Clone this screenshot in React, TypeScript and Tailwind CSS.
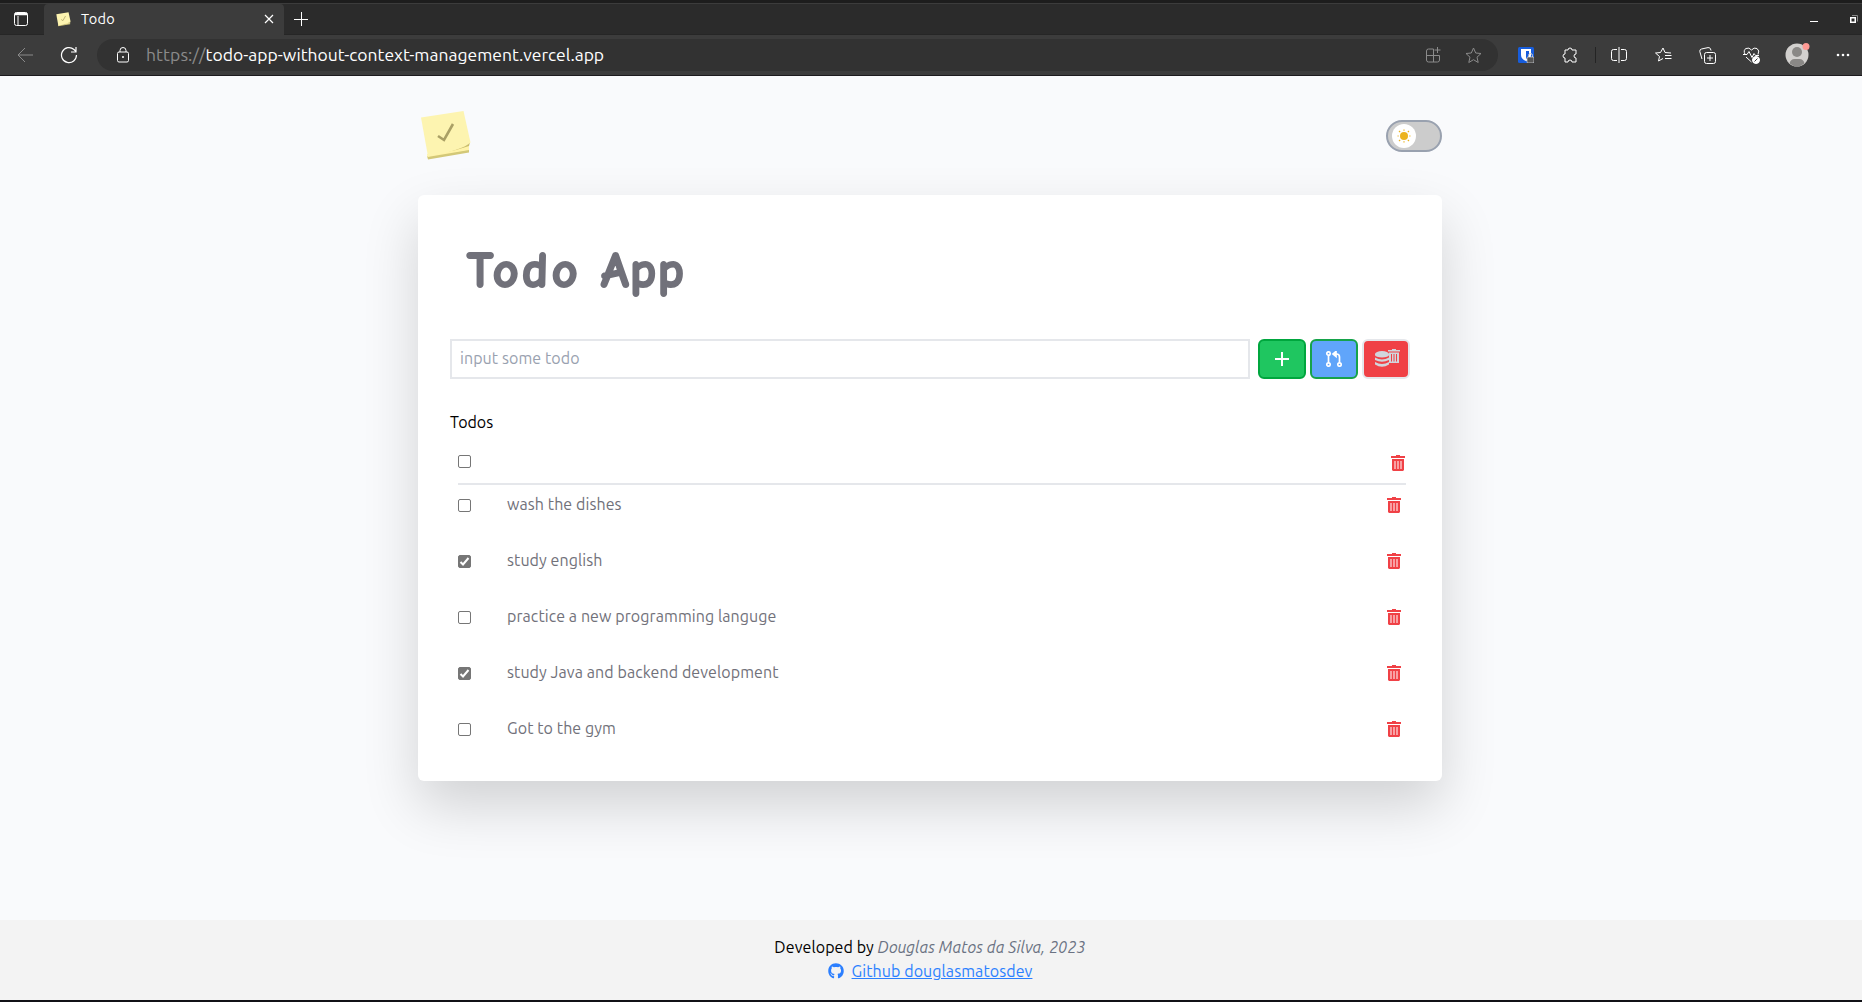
import React from 'react';
import { FaGithub } from 'react-icons/fa6';

const w = 'fill-none stroke-current';

function Note({ className }: { className: string }) {
  return (
    <svg viewBox="0 0 52 52" className={className}>
      <path d="M7 46 49 39.500 49 42.500 8 49.500Z" fill="#d3c878" />
      <path d="M7 44 49 35 49 40 7.500 47Z" fill="#fff3a8" />
      <path d="M26 42Q42 38 50 32L49 36 36 40Z" fill="#c9bd6c" />
      <path d="M1 7.500 43.500 1 50.500 32.500Q43 40 8 46.500Z" fill="#fdf4b0" />
      <path d="M18 26 24 30 33 14" fill="none" stroke="#aaa065" strokeWidth="2.600" />
    </svg>
  );
}

function Bin({ className }: { className: string }) {
  return (
    <svg viewBox="0 0 14 16" className={className} fill="currentColor">
      <path d="M5 0h4v1h5v2H0V1h5z" />
      <path d="M1 4h12v11l-1 1H2l-1-1z" />
      <path d="M3 6h2v8H3zM6 6h2v8H6zM9 6h2v8H9z" fill="#fff" fillOpacity=".5" />
    </svg>
  );
}

function Browser() {
  return (
    <header className="h-[76px] bg-[#3c3c3c] text-white border-b border-[#1c1a1e] flex flex-col">
      <div className="h-[35px] shrink-0 bg-[#2b2b2b] border-t-[3px] border-[#1d1d1d] flex">
        <div className="h-full w-full border-t border-t-[#3c3c3c] border-b border-b-[#262626] flex items-center">
          <svg viewBox="0 0 14 14" className={`ml-[14px] size-[14px] ${w}`}>
            <rect x=".5" y=".5" width="13" height="13" rx="2" />
            <path d="M.5 2.500h13M4 4v9" /><path d="M1 2h12" strokeWidth="2.500" />
          </svg>
          <div className="ml-4 w-60 h-[31px] bg-[#3c3c3c] rounded-t flex items-center">
            <Note className="ml-3 size-[15px]" />
            <span className="ml-[10px] text-[14.500px] leading-4 tracking-[0.3px] w-[160px]">Todo</span>
            <svg viewBox="0 0 10 10" className={`ml-[23px] size-[10px] ${w}`}><path d="m1 1 8 8M9 1 1 9" strokeWidth="1.200" /></svg>
          </div>
          <svg viewBox="0 0 14 14" className={`ml-[10px] size-[14px] ${w}`}><path d="M7.500 0v14M0 7.500h14" /></svg>
          <svg viewBox="0 0 50 18" className={`ml-auto w-[50px] h-[18px] ${w}`}>
            <path d="M0 11.500h8" /><rect x="40.750" y="7.750" width="4.500" height="4.500" strokeWidth="1.500" /><path d="M42 5.500h5.500v6" stroke="#888" />
          </svg>
          <span className="w-[2px]" />
        </div>
      </div>
      <div className="h-10 flex items-center">
        <svg viewBox="0 0 17 16" className={`ml-[17px] w-[17px] h-4 text-[#8a8a8a] ${w}`}><path d="M16 8H1M8 1 1 8l7 7" /></svg>
        <svg viewBox="0 0 18 18" className={`ml-[26px] size-[18px] ${w}`}><path d="M16.500 9A7.500 7.500 0 1 1 14 3.500L16 5.500M16 1v5h-5" strokeWidth="1.200" /></svg>
        <div className="ml-[19px] w-[1401px] h-8 rounded-full bg-[#323232] flex items-center">
          <svg viewBox="0 0 12 16" className={`ml-5 w-3 h-4 ${w}`}><rect x=".5" y="5" width="11" height="10" rx="1.500" /><path d="M3 5V3.500a3 3 0 0 1 6 0V5" /><circle cx="6" cy="10" r=".6" fill="currentColor" /></svg>
          <span className="ml-[17px] text-[17.500px] whitespace-nowrap"><span className="text-[#8b8b8b] tracking-[0.1px]">https://</span>todo-app-without-context-management.vercel.app</span>
          <svg viewBox="0 0 16 16" className={`ml-auto size-4 text-[#8b8b8b] ${w}`}><path d="M7.500 2H2.500q-2 0-2 2v9q0 2 2 2h9q2 0 2-2V8.500H.5M7.500 2v13M11.500 0v6M8.500 3h6" /></svg>
          <svg viewBox="0 0 17 17" className={`ml-[23px] mr-4 size-[17px] text-[#8b8b8b] ${w}`}><path d="m8.500 1 2.200 5 5.300.5-4 3.700 1.200 5.300-4.700-2.800-4.700 2.800L5 10.200 1 6.500 6.300 6z" /></svg>
        </div>
        <svg viewBox="0 0 16 16" className="ml-5 size-4">
          <rect width="16" height="16" rx="1.500" fill="#175ddc" />
          <path d="M3 2h10v6q0 4-5 6-5-2-5-6z" fill="#fff" /><path d="M8 4h3v5q-1 2-3 3z" fill="#175ddc" />
          <rect x="9" y="10" width="7" height="6" rx="1" fill="#555" stroke="#eee" strokeWidth=".6" /><path d="M10.500 10V8.500a2 2 0 0 1 4 0V10" stroke="#ccc" fill="none" />
        </svg>
        <svg viewBox="0 0 17 17" className={`ml-[28px] size-[17px] ${w}`}><path d="M3 3h3a2 2 0 1 1 4 0h4v4a2 2 0 1 0 0 4v4h-4a2 2 0 0 0-4 0H3v-4a2 2 0 1 1 0-4z" strokeLinejoin="round" /></svg>
        <span className="ml-4 w-px h-4 bg-[#242424]" />
        <svg viewBox="0 0 16 16" className={`ml-[15px] size-4 ${w}`}><path d="M6 2.500H2.500q-2 0-2 2v7q0 2 2 2H6M10 2.500h3.500q2 0 2 2v7q0 2-2 2H10M8 0v16" /></svg>
        <svg viewBox="0 0 17 16" className={`ml-7 w-[17px] h-4 ${w}`}><path d="M8 11.500 3.500 14l1-4.500L.5 6l5-.5L8 1l2 4.500 6 .5M10 8.500h6.500M10 11.500h6.500" /></svg>
        <svg viewBox="0 0 17 17" className={`ml-[27px] size-[17px] ${w}`}><rect x="5.500" y="5.500" width="11" height="11" rx="2" /><path d="M11 8v6M8 11h6M3 12 .8 4.500Q.5 2.500 2.500 2L9 .6q2-.3 2.500 1.400l.5 1.500" /></svg>
        <svg viewBox="0 0 17 17" className={`ml-[27px] size-[17px] ${w}`}><path d="M2 7.500Q0 3 3 1.500 6 0 8.500 3 11 0 14 1.500q3 2 1 6M0 7.500h4l2-3 3 6 2-4 1.500 2H16M3 10l5.500 5" /><circle cx="13" cy="13" r="3.500" fill="currentColor" /><path d="m11.500 14.500 3-3" stroke="#3c3c3c" /></svg>
        <svg viewBox="0 0 26 26" className="ml-[25px] size-[26px]">
          <circle cx="12" cy="13" r="11.500" fill="#d2d0ce" /><circle cx="12" cy="10" r="5" fill="#8a8886" /><path d="M4.500 21.500q1-4.500 5-4.500h5q4 0 5 4.500Q12 27.500 4.500 21.500" fill="#8a8886" /><circle cx="21" cy="4.500" r="3.500" fill="#ff9a94" />
        </svg>
        <svg viewBox="0 0 14 4" className="ml-[25px] w-[14px] h-1" fill="currentColor"><circle cx="2" cy="2" r="1.300" /><circle cx="7" cy="2" r="1.300" /><circle cx="12" cy="2" r="1.300" /></svg>
      </div>
    </header>
  );
}

function Check({ on }: { on: boolean }) {
  return (
    <svg viewBox="0 0 13 13" className="size-[13px] shrink-0">
      <rect x=".5" y=".5" width="12" height="12" rx="1.500" fill={on ? '#767676' : '#fff'} stroke="#767676" />
      {on && <path d="m2.500 7 2.500 2.500L10.500 3" fill="none" stroke="#fff" strokeWidth="2" />}
    </svg>
  );
}

const todos = [
  { text: 'wash the dishes', done: false },
  { text: 'study english', done: true },
  { text: 'practice a new programming languge', done: false },
  { text: 'study Java and backend development', done: true },
  { text: 'Got to the gym', done: false },
];

export default function App() {
  return (
    <div className="w-[1862px] h-[1002px] overflow-hidden flex flex-col bg-[#f9fafc] text-black font-['Ubuntu','Noto_Sans',sans-serif] text-base">
      <Browser />
      <main className="flex-1 w-[1024px] ml-[418px]">
        <div className="h-[119px] flex items-center justify-between">
          <Note className="ml-[2px] size-[52px]" />
          <div className="w-14 h-8 rounded-full border-2 border-gray-400 bg-[#ccc] pl-1 flex items-center">
            <div className="size-6 rounded-full bg-white flex items-center justify-center">
              <svg viewBox="0 0 14 14" className="size-[14px] text-[#ecb31c]"><circle cx="7" cy="7" r="4" fill="currentColor" /><path d="M7 .5v1.200M7 12.300v1.200M.5 7h1.200M12.300 7h1.200M2 2l1.200 1.200M10.800 10.800l1.200 1.200M2 12l1.200-1.200M10.800 3.200 12 2" stroke="currentColor" strokeWidth="1.200" /></svg>
            </div>
          </div>
        </div>
        <section className="h-[586px] rounded-md bg-white px-8 shadow-[0_25px_55px_rgba(0,4,0,0.16)]">
          <div className="h-36 pt-[44px]">
            <h1 className="pl-[17px] flex text-[50px] leading-[64px] font-bold text-[#71717a] whitespace-nowrap font-['Comic_Sans_MS','Comic_Neue','Comic_Relief','Purisa',cursive] [-webkit-text-stroke:2px_#71717a]">
              <span className="w-[134px] tracking-[3.500px]">Todo </span>
              <span className="tracking-[1.500px]">App</span>
            </h1>
          </div>
          <div className="flex h-10">
            <input readOnly placeholder="input some todo" className="w-[800px] h-10 border-2 border-gray-200 px-2 pb-0.5 tracking-[0.080px] placeholder:text-gray-400 outline-none" />
            <button className="ml-2 w-12 h-10 rounded-md border-2 border-green-600 bg-[#1fc660] text-white flex items-center justify-center"><svg viewBox="0 0 14 14" className="size-[14px]"><path d="M7 0v14M0 7h14" stroke="currentColor" strokeWidth="2" /></svg></button>
            <button className="ml-1 w-12 h-10 rounded-md border-2 border-[#16a34a] bg-[#60a5fa] text-white flex items-center justify-center">
              <svg viewBox="0 0 16 16" className={`size-4 ${w}`} strokeWidth="1.700"><circle cx="2.500" cy="2.500" r="1.700" /><circle cx="2.500" cy="13.500" r="1.700" /><circle cx="13.500" cy="13.500" r="1.700" /><path d="M2.500 4v8M13.500 12V6q0-3-3-3H8" /><path d="m10 .5-3 2.500 3 2.500z" fill="currentColor" /></svg>
            </button>
            <button className="ml-1 w-12 h-10 rounded-md border-2 border-gray-200 bg-[#f04146] text-gray-300 flex items-start justify-center pt-2">
              <svg viewBox="0 0 14 16" className="ml-0.5 mt-0.5 w-[14px] h-4" fill="currentColor"><path d="M0 3a7 3 0 0 1 14 0v1a7 2.500 0 0 1-14 0zM0 6.500q7 4 14 0V9Q7 12.500 0 9zM0 11q7 4 14 0v2.500Q7 18 0 13.500z" /></svg>
              <svg viewBox="0 0 12 14" className="-ml-px w-3 h-[14px]" fill="currentColor"><path d="M4 0h4v1h4v1.500H0V1h4zM1 3.500h10V14H1z" /><path d="M3.500 5v7.500M6 5v7.500M8.500 5v7.500" stroke="#f04146" /></svg>
            </button>
          </div>
          <h2 className="mt-[31px] h-6 leading-6">Todos</h2>
          <div className="ml-2 mr-1 mt-4 h-[35px] border-b-2 border-gray-200 flex items-start justify-between">
            <div className="pt-[5px]"><Check on={false} /></div>
            <Bin className="mt-[5px] mr-px w-[14px] h-4 text-[#f04146]" />
          </div>
          <ul className="pl-2 pr-1">
            {todos.map((t) => (
              <li key={t.text} className="h-10 mb-4 flex items-center">
                <Check on={t.done} />
                <span className="ml-9 pb-[3px] text-[#71717a] tracking-[0.080px] whitespace-nowrap">{t.text}</span>
                <Bin className="ml-auto mr-[5px] w-[14px] h-4 text-[#f04146]" />
              </li>
            ))}
          </ul>
        </section>
      </main>
      <footer className="h-[82px] bg-[#f3f3f3] border-b-2 border-[#111116] pt-[15px] pr-0.5 text-center leading-6 tracking-[0.080px] whitespace-nowrap">
        <p>Developed by <i className="text-gray-500">Douglas Matos da Silva, 2023</i></p>
        <p className="flex items-center justify-center gap-2 text-blue-500"><FaGithub size={16} /><a className="underline">Github douglasmatosdev</a></p>
      </footer>
    </div>
  );
}
